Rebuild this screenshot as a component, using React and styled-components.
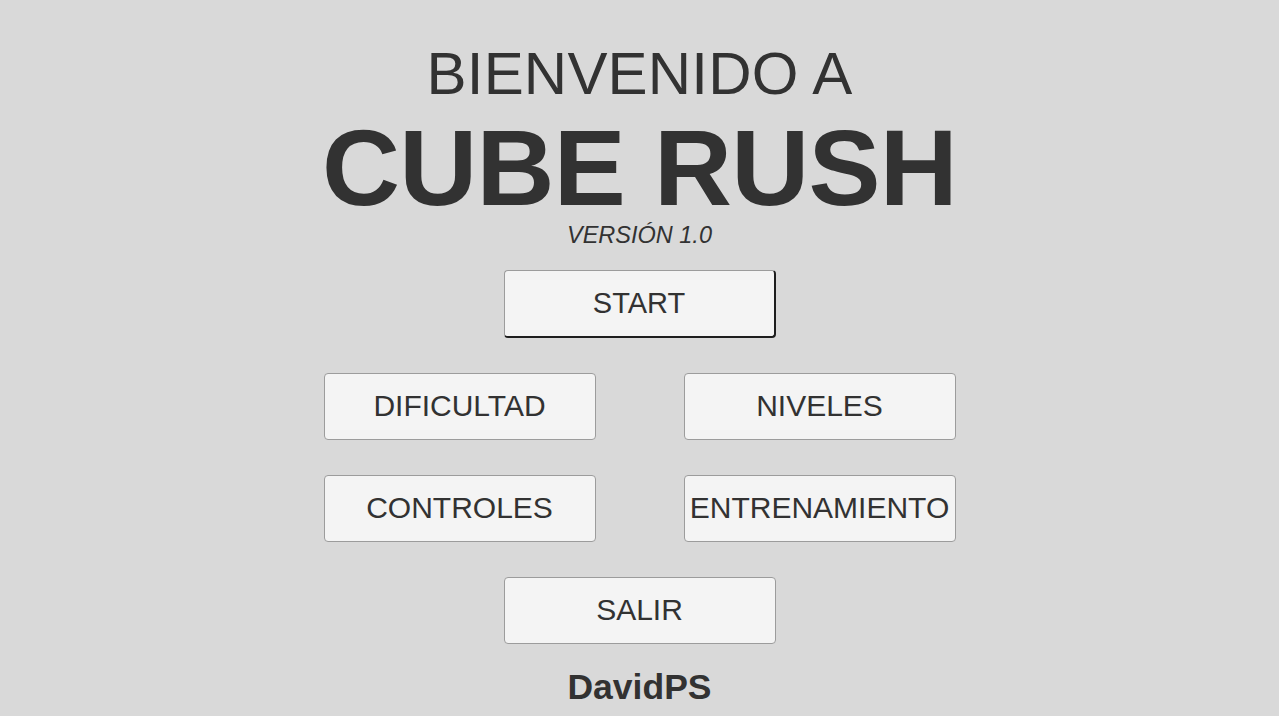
import React from "react";
import styled, { createGlobalStyle, css } from "styled-components";

const Global = createGlobalStyle`
  html, body { margin: 0; padding: 0; background: #d9d9d9; }
  body { font-family: "Liberation Sans", Arial, sans-serif; color: #323232; }
`;

const Screen = styled.main`
  min-height: 716px;
  display: flex;
  flex-direction: column;
  align-items: center;
  padding-top: 44px;
  box-sizing: border-box;
`;

const Welcome = styled.h2`
  margin: 0;
  font-size: 60px;
  font-weight: 400;
  line-height: 1;
  letter-spacing: 0.2px;
`;

const Title = styled.h1`
  margin: 15px 0 0;
  font-size: 108px;
  font-weight: 700;
  line-height: 0.9;
  letter-spacing: -0.8px;
`;

const Version = styled.div`
  margin-top: 8px;
  font-size: 23.5px;
  font-style: italic;
  line-height: 1;
`;

const Menu = styled.nav`
  margin-top: 22px;
  display: flex;
  flex-direction: column;
  align-items: center;
  gap: 35px;
`;

const Row = styled.div`
  display: flex;
  gap: 88px;
`;

const Button = styled.button`
  width: 272px;
  height: 67px;
  box-sizing: border-box;
  display: flex;
  align-items: center;
  justify-content: center;
  padding: 0;
  background: #f4f4f4;
  border: 1px solid #9c9c9c;
  border-radius: 4px;
  font-family: "Liberation Sans", Arial, sans-serif;
  font-size: 30px;
  line-height: 1;
  color: #323232;
  white-space: nowrap;
  cursor: pointer;
  ${(p) =>
    p.$selected &&
    css`
      border-right: 2px solid #1e1e1e;
      border-bottom: 2px solid #1e1e1e;
      height: 68px;
      padding-top: 1px;
      font-size: 29px;
    `}
`;

const Author = styled.div`
  margin-top: 26px;
  font-size: 35.5px;
  font-weight: 700;
  line-height: 1;
`;

export default function App() {
  return (
    <>
      <Global />
      <Screen>
        <Welcome>BIENVENIDO A</Welcome>
        <Title>CUBE RUSH</Title>
        <Version>VERSIÓN 1.0</Version>
        <Menu>
          <Button $selected>START</Button>
          <Row>
            <Button>DIFICULTAD</Button>
            <Button>NIVELES</Button>
          </Row>
          <Row>
            <Button>CONTROLES</Button>
            <Button>ENTRENAMIENTO</Button>
          </Row>
          <Button>SALIR</Button>
        </Menu>
        <Author>DavidPS</Author>
      </Screen>
    </>
  );
}
